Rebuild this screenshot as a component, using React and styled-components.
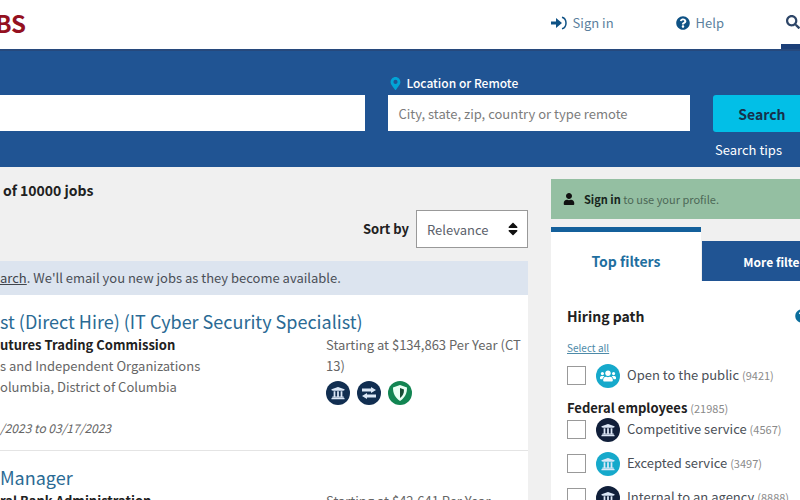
import React from 'react'
import styled, { createGlobalStyle } from 'styled-components';
import { FaQuestionCircle, FaSearch, FaMapMarkerAlt, FaUser, FaUniversity, FaUsers, FaSort } from 'react-icons/fa';


const GlobalStyle = createGlobalStyle`
  * {
    box-sizing: border-box;
  }
  body {
    margin: 0;
    background: #f0f0f0;
    color: #212121;
    font-family: "Noto Sans CJK SC", "Noto Sans", sans-serif;
    font-size: 13px;
    line-height: 20px;
  }
  input, button, select {
    font-family: inherit;
  }
`;

const Page = styled.div`
  height: 100vh;
  overflow: hidden;
`;

const Header = styled.header`
  display: flex;
  align-items: stretch;
  justify-content: space-between;
  height: 49px;
  background: #fff;
`;

const Logo = styled.a`
  display: flex;
  justify-content: flex-end;
  align-items: center;
  width: 26px;
  height: 46px;
  color: #941020;
  font-size: 24px;
  font-weight: 700;
  text-decoration: none;
`;

const Nav = styled.nav`
  display: flex;
`;

const NavLink = styled.a`
  display: flex;
  align-items: center;
  gap: 6px;
  height: 46px;
  margin-right: ${(props) => props.$space}px;
  color: #5b7f9d;
  text-decoration: none;
  white-space: nowrap;

  svg {
    color: #0f5285;
  }
`;

const SearchToggle = styled.button`
  width: 19px;
  height: 49px;
  padding: 2px 0 0 5px;
  border: 0;
  border-bottom: 5px solid #1c3f78;
  background: none;
  color: #2e4668;
`;

const SearchBar = styled.form`
  display: grid;
  grid-template-columns: 366fr 302fr 87px;
  column-gap: 23px;
  height: 118px;
  padding-top: 24px;
  border-top: 2px solid #27497c;
  background: #205493;
`;

const Field = styled.div`
  display: flex;
  flex-direction: column;
`;

const FieldLabel = styled.label`
  display: flex;
  align-items: center;
  gap: 4px;
  height: 20px;
  padding: 0 0 4px 1px;
  color: #fff;
  font-size: 12px;
  font-weight: 500;

  svg {
    color: #02a4d6;
  }
`;

const TextInput = styled.input`
  width: 100%;
  height: 36px;
  padding: 0 10px;
  border: 0;
  border-radius: 0;
  background: #fff;
  font-size: 13px;

  &::placeholder {
    color: #7c7c7c;
  }
`;

const SearchSide = styled.div`
  display: flex;
  flex-direction: column;
  align-items: flex-start;
  padding-top: 20px;
`;

const SearchButton = styled.button`
  width: 98px;
  height: 37px;
  border: 0;
  border-radius: 3px;
  background: #02bfe7;
  color: #17304a;
  font-size: 14px;
  font-weight: 700;
`;

const TipsLink = styled.a`
  margin: 8px 2px;
  color: #fff;
  text-decoration: none;
`;

const Body = styled.div`
  display: grid;
  grid-template-columns: 1fr 249px;
  column-gap: 23px;
`;

const Results = styled.main`
  min-width: 0;
`;

const Count = styled.p`
  height: 43px;
  margin: 0;
  padding: 13px 3px 0;
  font-size: 14px;
  font-weight: 700;
`;

const SortRow = styled.div`
  display: flex;
  align-items: center;
  justify-content: flex-end;
  gap: 7px;
  margin-bottom: 13px;

  label {
    font-weight: 700;
  }
`;

const SelectWrap = styled.div`
  position: relative;

  svg {
    position: absolute;
    top: 11px;
    right: 7px;
    pointer-events: none;
  }
`;

const Select = styled.select`
  display: block;
  width: 112px;
  height: 38px;
  padding: 0 10px;
  border: 1px solid #999;
  border-radius: 0;
  appearance: none;
  background: #fff;
  color: #5b616b;
  font-size: 13px;
`;

const SaveNotice = styled.div`
  height: 34px;
  padding: 7px 0;
  background: #dce4ef;
  color: #4a4f57;
  white-space: nowrap;

  a {
    color: #40454c;
  }
`;

const Job = styled.article`
  height: 156px;
  padding-top: 14px;
  border-bottom: 1px solid #e4e4e4;
  background: #fff;
`;

const JobTitle = styled.h2`
  margin: 0;
  font-size: 18px;
  font-weight: 400;
  line-height: 24px;
  white-space: nowrap;

  a {
    color: #2a6a94;
    text-decoration: none;
  }
`;

const JobColumns = styled.div`
  display: grid;
  grid-template-columns: 1fr 202px;
  margin-top: 1px;
  line-height: 21px;
`;

const JobLine = styled.p`
  margin: 0;
  color: ${(props) => (props.$strong ? '#212121' : '#666')};
  font-weight: ${(props) => (props.$strong ? 700 : 400)};
`;

const Dates = styled.p`
  margin: 20px 0 0;
  color: #666;
  font-size: 12px;
  font-style: italic;
`;

const Badges = styled.div`
  display: flex;
  gap: 7px;
  padding-top: 5px;
`;

const Sidebar = styled.aside`
  min-width: 0;
  padding-top: 12px;
`;

const Profile = styled.div`
  display: flex;
  align-items: center;
  gap: 9px;
  height: 40px;
  margin-bottom: 8px;
  padding: 0 12px;
  background: #94bfa2;
  color: #4d6857;
  font-size: 11px;

  a {
    color: #17251c;
    font-weight: 700;
    text-decoration: none;
  }
  svg {
    color: #111;
  }
`;

const Tabs = styled.div`
  display: grid;
  grid-template-columns: 150px 150px;
  align-items: end;
  column-gap: 1px;
`;

const Tab = styled.button`
  height: ${(props) => (props.$active ? 54 : 40)}px;
  padding: ${(props) => (props.$active ? '8px 0 0' : '0')};
  border: 0;
  border-top: ${(props) => (props.$active ? '5px solid #14609b' : '0')};
  background: ${(props) => (props.$active ? '#fff' : '#205493')};
  color: ${(props) => (props.$active ? '#1f6f9f' : '#fff')};
  font-size: ${(props) => (props.$active ? 14 : 12)}px;
  font-weight: 700;
`;

const Filters = styled.section`
  height: 280px;
  padding: 25px 0 0 16px;
  background: #fff;
`;

const FilterHead = styled.div`
  display: flex;
  align-items: center;
  justify-content: space-between;

  h3 {
    margin: 0;
    font-size: 14px;
    line-height: 20px;
  }
`;

const HelpButton = styled.button`
  display: flex;
  width: 5px;
  padding: 0;
  border: 0;
  background: none;
  color: #0b6e9c;

  svg {
    flex: none;
  }
`;

const SelectAll = styled.a`
  display: block;
  margin-top: 12px;
  color: #4d8aa8;
  font-size: 10px;
`;

const Option = styled.label`
  display: flex;
  align-items: center;
  height: 34px;
  color: #4a4f57;
  white-space: nowrap;

  > svg {
    margin: 2px 7px 0 10px;
  }
`;

const Check = styled.input`
  flex: none;
  width: 19px;
  height: 19px;
  margin: 0;
  border: 1px solid #999;
  appearance: none;
  background: #fff;
`;

const Total = styled.span`
  color: #8a8a8a;
  font-size: 11px;
  font-weight: 400;
`;

const GroupTitle = styled.h4`
  margin: 6px 0 -6px;
  font-size: 13px;
  line-height: 20px;
`;


const SignInIcon = () => (
  <svg width="16" height="16" viewBox="0 0 16 16" aria-hidden="true">
    <path d="M0 6.500h5V3l6 5-6 5V9.500H0z" fill="currentColor" />
    <path d="M11 2.200c3 .8 4 3 4 5.800s-1 5-4 5.800" fill="none" stroke="currentColor" strokeWidth="1.500" />
  </svg>
);

const Badge = ({ color, children }) => (
  <svg width="24" height="24" viewBox="0 0 24 24" aria-hidden="true">
    <circle cx="12" cy="12" r="12" fill={color} />
    {children}
  </svg>
);

const BankBadge = ({ color }) => (
  <Badge color={color}><FaUniversity x="5" y="5" size={14} color="#dce8f7" /></Badge>
);

const jobs = [
  {
    title: 'st (Direct Hire) (IT Cyber Security Specialist)',
    agency: 'utures Trading Commission',
    department: 's and Independent Organizations',
    location: 'olumbia, District of Columbia',
    pay: 'Starting at $134,863 Per Year (CT 13)',
    dates: '/2023 to 03/17/2023',
  },
  {
    title: 'Manager',
    agency: 'ral Bank Administration',
    department: '',
    location: '',
    pay: 'Starting at $42,641 Per Year',
    dates: '',
  },
];


const App = () => {
  return (
    <Page>
      <GlobalStyle />
      <Header>
        <Logo href="#">BS</Logo>
        <Nav>
          <NavLink href="#" $space={62}><SignInIcon />Sign in</NavLink>
          <NavLink href="#" $space={57}><FaQuestionCircle size={14} />Help</NavLink>
          <SearchToggle aria-label="Search"><FaSearch size={14} /></SearchToggle>
        </Nav>
      </Header>

      <SearchBar onSubmit={(e) => e.preventDefault()}>
        <Field>
          <FieldLabel htmlFor="keywords" />
          <TextInput id="keywords" aria-label="Keywords" />
        </Field>
        <Field>
          <FieldLabel htmlFor="location"><FaMapMarkerAlt size={13} />Location or Remote</FieldLabel>
          <TextInput id="location" placeholder="City, state, zip, country or type remote" />
        </Field>
        <SearchSide>
          <SearchButton type="submit">Search</SearchButton>
          <TipsLink href="#">Search tips</TipsLink>
        </SearchSide>
      </SearchBar>

      <Body>
        <Results>
          <Count>of 10000 jobs</Count>
          <SortRow>
            <label htmlFor="sort">Sort by</label>
            <SelectWrap>
              <Select id="sort"><option>Relevance</option></Select>
              <FaSort size={16} color="#111" />
            </SelectWrap>
          </SortRow>
          <SaveNotice><a href="#">arch</a>. We'll email you new jobs as they become available.</SaveNotice>
          {jobs.map((job) => (
            <Job key={job.title}>
              <JobTitle><a href="#">{job.title}</a></JobTitle>
              <JobColumns>
                <div>
                  <JobLine $strong>{job.agency}</JobLine>
                  <JobLine>{job.department}</JobLine>
                  <JobLine>{job.location}</JobLine>
                  <Dates>{job.dates}</Dates>
                </div>
                <div>
                  <JobLine>{job.pay}</JobLine>
                  <Badges>
                    <BankBadge color="#112e51" />
                    <Badge color="#112e51">
                      <path d="M5 7.500h9V6l5 3-5 3v-1.500H5zM19 13.500h-9V12l-5 3 5 3v-1.500h9z" fill="#dce8f7" />
                    </Badge>
                    <Badge color="#128552">
                      <path d="M12 4l7 2.500c0 6-2 10-7 13.500-5-3.500-7-7.500-7-13.500z" fill="#e9fff4" />
                      <path d="M12 7l4 1.500c0 4-1 6-4 8.500z" fill="#174c35" />
                    </Badge>
                  </Badges>
                </div>
              </JobColumns>
            </Job>
          ))}
        </Results>

        <Sidebar>
          <Profile>
            <FaUser size={12} />
            <span><a href="#">Sign in</a> to use your profile.</span>
          </Profile>
          <Tabs>
            <Tab $active>Top filters</Tab>
            <Tab>More filters</Tab>
          </Tabs>
          <Filters>
            <FilterHead>
              <h3>Hiring path</h3>
              <HelpButton aria-label="Help"><FaQuestionCircle size={14} /></HelpButton>
            </FilterHead>
            <SelectAll href="#">Select all</SelectAll>
            <Option>
              <Check type="checkbox" />
              <Badge color="#16a9cb"><FaUsers x="4" y="4" size={16} color="#fff" /></Badge>
              <span>Open to the public <Total>(9421)</Total></span>
            </Option>
            <GroupTitle>Federal employees <Total>(21985)</Total></GroupTitle>
            <Option>
              <Check type="checkbox" />
              <BankBadge color="#101f3a" />
              <span>Competitive service <Total>(4567)</Total></span>
            </Option>
            <Option>
              <Check type="checkbox" />
              <BankBadge color="#16a9cb" />
              <span>Excepted service <Total>(3497)</Total></span>
            </Option>
            <Option>
              <Check type="checkbox" />
              <BankBadge color="#101f3a" />
              <span>Internal to an agency <Total>(8888)</Total></span>
            </Option>
          </Filters>
        </Sidebar>
      </Body>
    </Page>
  )
}

export default App
